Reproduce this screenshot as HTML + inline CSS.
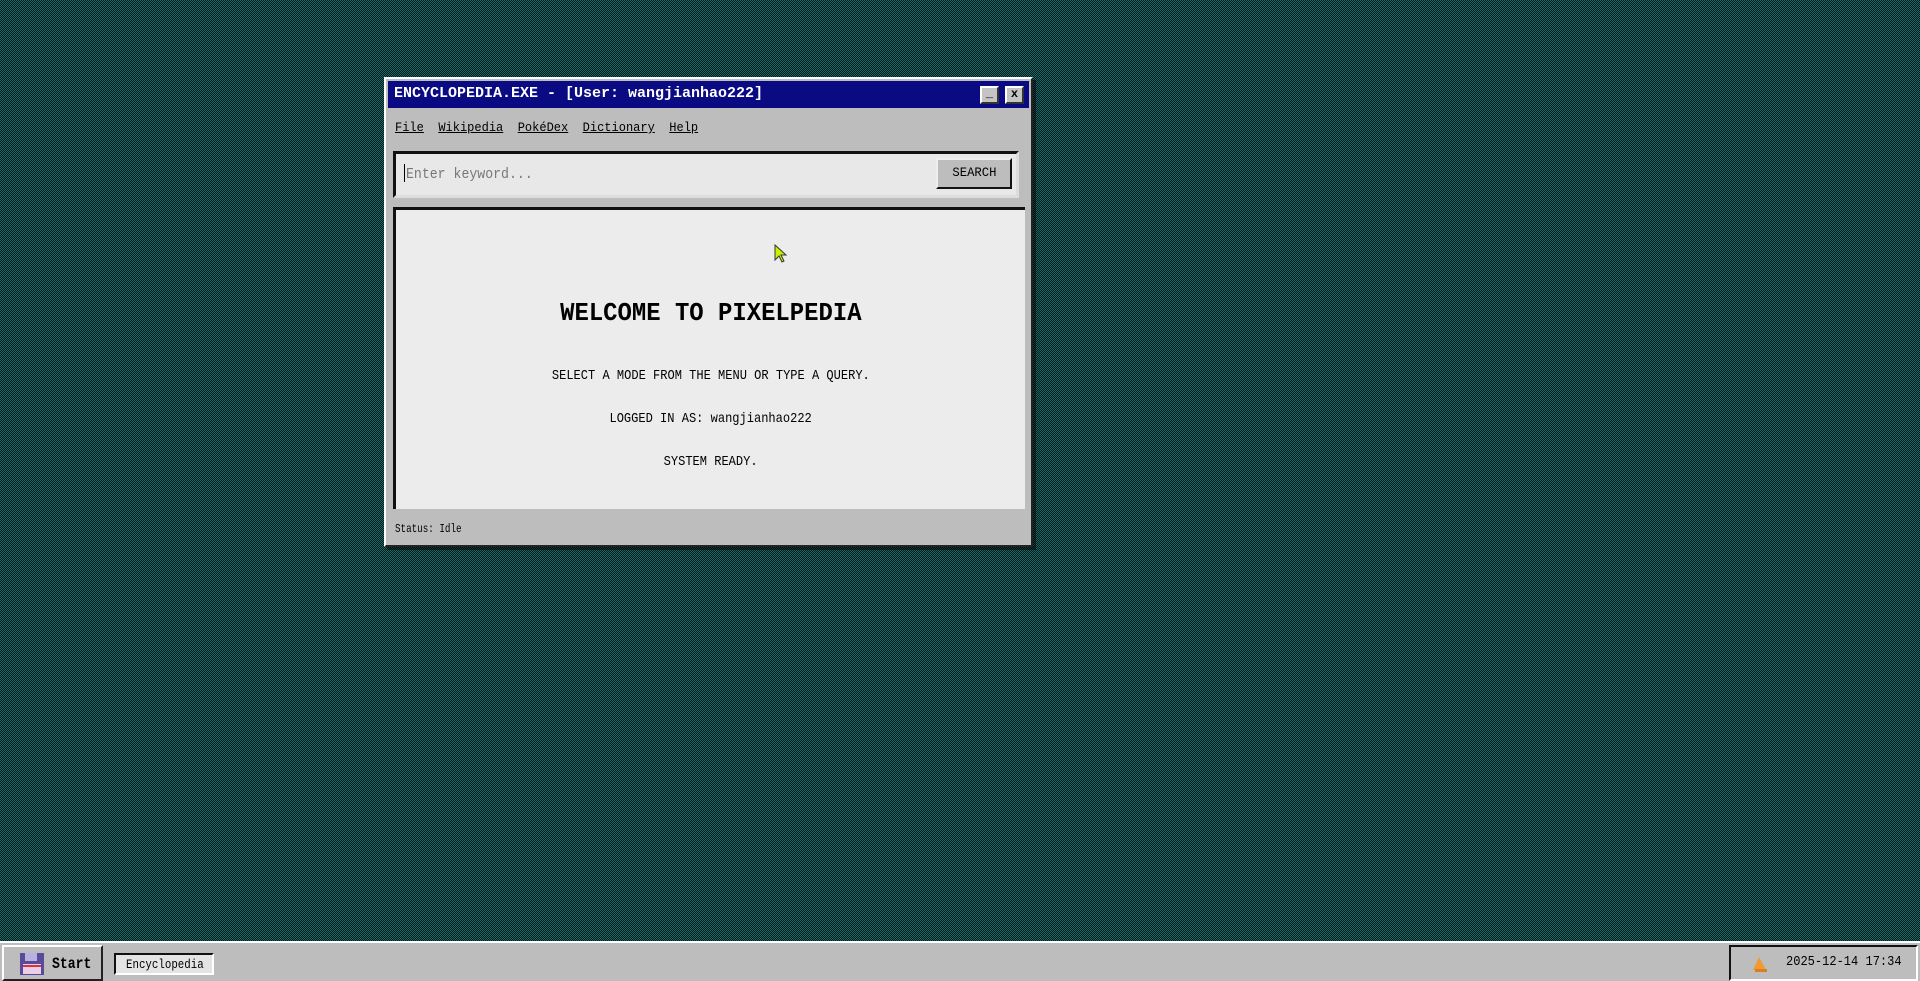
<!DOCTYPE html>
<html><head><meta charset="utf-8"><style>
*{margin:0;padding:0;box-sizing:border-box}
body{width:1920px;height:981px;overflow:hidden;position:relative;font-family:"Liberation Mono",monospace;
background-color:#116c6a;background-image:linear-gradient(45deg,#051616 25%,transparent 25%,transparent 75%,#051616 75%),linear-gradient(45deg,#051616 25%,transparent 25%,transparent 75%,#051616 75%);background-size:2px 2px;background-position:0 0,1px 1px}
.scan{background-image:repeating-linear-gradient(0deg,rgba(0,0,0,.07) 0 1px,transparent 1px 3px)}
.win{position:absolute;left:384px;top:77px;width:649px;height:470px;background:#bdbdbd;border:2px solid;border-color:#fff #222 #222 #fff;box-shadow:3px 3px 0 rgba(0,0,0,.5)}
.title{position:absolute;left:2px;top:2px;right:2px;height:27px;background:#0a0a82;color:#fff}
.t{position:absolute;white-space:nowrap;transform-origin:left center;display:inline-block}
.btn{position:absolute;top:5px;width:19px;height:18px;background:#c4c4c4;border:2px solid;border-color:#fff #333 #333 #fff;font-size:12px;font-weight:bold;color:#000;text-align:center;line-height:13px}
.menu span{text-decoration:underline}
.search{position:absolute;left:7px;top:72px;width:626px;height:47px;background:#e8e8e8;border:3px solid;border-color:#111 #ddd #ddd #111}
.sbtn{position:absolute;right:4px;top:4px;width:76px;height:31px;background:#bdbdbd;border:2px solid;border-color:#eee #111 #111 #eee;font-size:13px;text-align:center;line-height:26px}
.content{position:absolute;left:7px;top:128px;width:632px;height:302px;background:#ececec;border:3px solid;border-color:#111 #ddd #ddd #111;border-width:3px 0 0 3px}
.ctr{position:absolute;left:0;width:100%;text-align:center;white-space:nowrap}
.ctr span{display:inline-block}
.task{position:absolute;left:0;top:941px;width:1920px;height:40px;background:#bdbdbd;border-top:2px solid #fff}
</style></head><body>
<div class="win scan">
 <div class="title"><span class="t" style="left:6px;top:4px;font-size:15px;font-weight:bold">ENCYCLOPEDIA.EXE - [User: wangjianhao222]</span>
  <div class="btn" style="right:30px">_</div><div class="btn" style="right:5px">x</div></div>
 <div class="menu t" style="left:9px;top:41px;font-size:13px;transform:scaleX(.925)"><span>File</span>&nbsp;&nbsp;<span>Wikipedia</span>&nbsp;&nbsp;<span>PokéDex</span>&nbsp;&nbsp;<span>Dictionary</span>&nbsp;&nbsp;<span>Help</span></div>
 <div class="search scan"><div style="position:absolute;left:8px;top:10px;width:1px;height:18px;background:#000"></div>
  <span class="t" style="left:10px;top:12px;font-size:15px;color:#777;transform:scaleX(.88)">Enter keyword...</span>
  <div class="sbtn"><span style="display:inline-block;transform:scaleX(.94)">SEARCH</span></div></div>
 <div class="content scan">
  <div class="ctr" style="top:88px;font-size:26px;font-weight:bold"><span style="transform:scaleX(.92)">WELCOME TO PIXELPEDIA</span></div>
  <div class="ctr" style="top:158px;font-size:14px"><span style="transform:scaleX(.86)">SELECT A MODE FROM THE MENU OR TYPE A QUERY.</span></div>
  <div class="ctr" style="top:201px;font-size:14px"><span style="transform:scaleX(.86)">LOGGED IN AS: wangjianhao222</span></div>
  <div class="ctr" style="top:244px;font-size:14px"><span style="transform:scaleX(.86)">SYSTEM READY.</span></div>
  <svg style="position:absolute;left:378px;top:34px" width="14" height="20" viewBox="0 0 14 20"><path d="M1 1 L1 16 L5 12 L8 18 L10 17 L7 11 L12 11 Z" fill="#c8f000" stroke="#333" stroke-width="1"/></svg>
 </div>
 <span class="t" style="left:9px;top:443px;font-size:12px;transform:scaleX(.77)">Status: Idle</span>
</div>
<div class="task scan">
 <div style="position:absolute;left:2px;top:2px;width:101px;height:36px;border:2px solid;border-color:#fff #222 #222 #fff">
  <svg style="position:absolute;left:15px;top:5px" width="26" height="24" viewBox="0 0 26 24"><rect x="1" y="1" width="24" height="22" fill="#5a4a9a"/><rect x="6" y="1" width="12" height="8" fill="#b8b0e0"/><rect x="4" y="12" width="18" height="10" fill="#e8d0e8"/><rect x="4" y="13" width="18" height="2" fill="#e03040"/></svg>
  <span class="t" style="left:48px;top:8px;font-size:16px;font-weight:bold;transform:scaleX(.82)">Start</span></div>
 <div style="position:absolute;left:114px;top:10px;width:100px;height:22px;background:#e4e4e4;border:2px solid;border-color:#111 #fff #fff #111">
  <span class="t" style="left:10px;top:2px;font-size:13px;transform:scaleX(.83)">Encyclopedia</span></div>
 <div style="position:absolute;left:1729px;top:2px;width:189px;height:36px;border:2px solid;border-color:#111 #fff #fff #111">
  <svg style="position:absolute;left:20px;top:9px" width="18" height="18" viewBox="0 0 18 18"><path d="M8 1 L15 14 L2 14 Z" fill="#f09a30"/><rect x="4" y="13" width="12" height="3" fill="#d88020"/></svg>
  <span class="t" style="left:55px;top:7px;font-size:14px;transform:scaleX(.86)">2025-12-14 17:34</span></div>
</div>
</body></html>
